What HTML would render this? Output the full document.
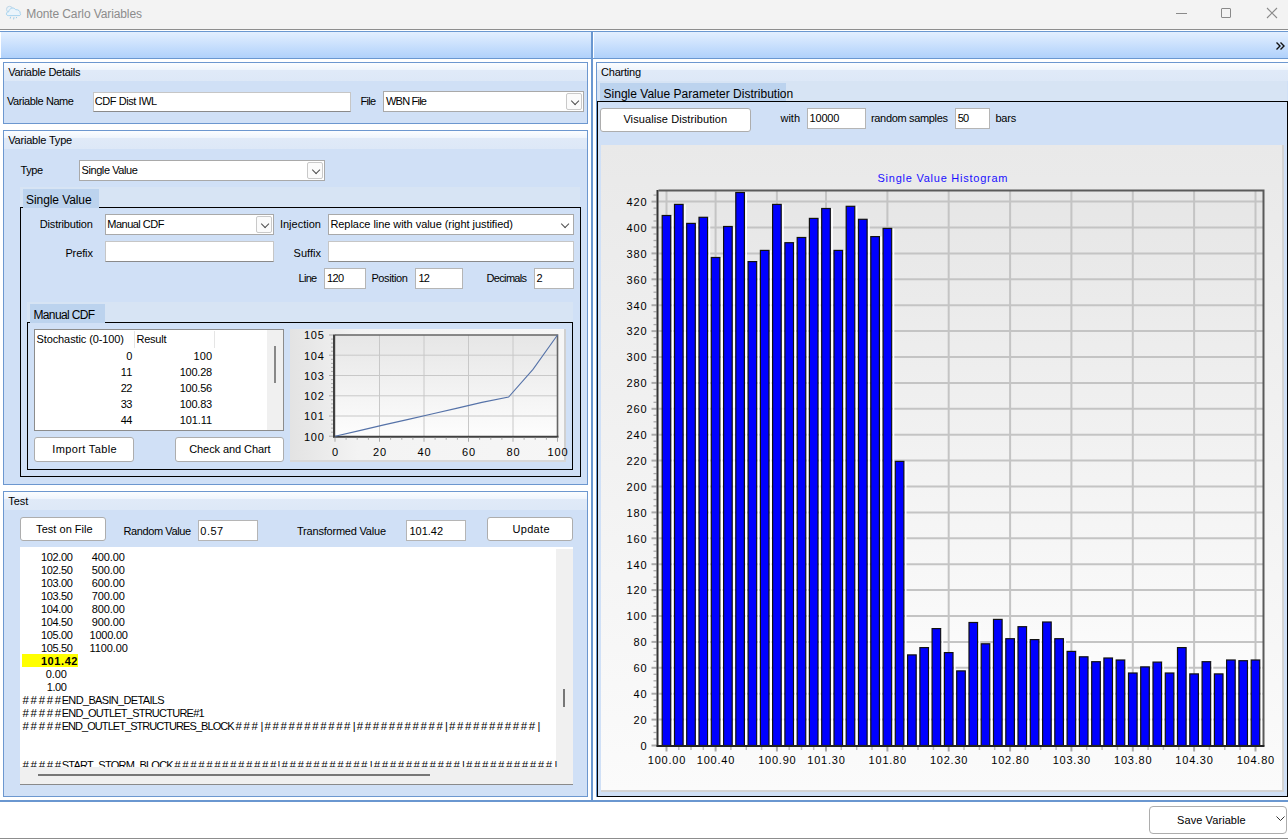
<!DOCTYPE html>
<html><head><meta charset="utf-8">
<style>
*{box-sizing:border-box;margin:0;padding:0}
html,body{width:1288px;height:840px;overflow:hidden;background:#fff}
body{position:relative;font-family:"Liberation Sans",sans-serif;font-size:12px;color:#000}
.a{position:absolute}
.t{position:absolute;white-space:nowrap;line-height:14px;font-size:12px}
.gb{position:absolute;border:1px solid #6c97cf;background:#d0e0f6}
.gh{position:absolute;left:0;right:0;top:0;height:18px;background:linear-gradient(#fbfdff 0,#eef4fc 40%,#e0eaf8 41%,#dde8f7 100%)}
.tb{position:absolute;background:#fff;border:1px solid #c6c6c6;border-bottom-color:#8a8a8a}
.cb{position:absolute;background:#fff;border:1px solid #a9a9a9}
.dd{position:absolute;right:1px;top:1px;bottom:1px;width:16px;border:1px solid #c9c9c9;border-radius:2px;background:#fbfbfb}
.dd:after{content:"";position:absolute;left:4.5px;top:3.6px;width:5.2px;height:5.2px;border-right:1px solid #505050;border-bottom:1px solid #505050;transform:rotate(45deg)}
.btn{position:absolute;background:#fff;border:1px solid #adadad;border-radius:3px;text-align:center;line-height:22px}
.blk{position:absolute;border:1px solid #000}
.tabarea{position:absolute;background:#d7e4f4}
.tabh{position:absolute;background:#bcd3ee;font-size:13.5px;line-height:18px;padding-left:3px;white-space:nowrap}
.r{text-align:right}
.mono{font-size:12px;line-height:13px}
</style></head><body>
<!-- title bar -->
<div class="a" style="left:0;top:0;width:1288px;height:29px;background:#f3f3f3"></div>
<svg class="a" style="left:0;top:0" width="24" height="24"><circle cx="9.5" cy="9.3" r="3" fill="#e9f2f8" stroke="#b9d3e4" stroke-width="0.9"/><path d="M8.2 15.6 C5.6 15.6 6 11.6 8.6 11.9 C9.2 8.2 13.6 6.6 15.7 9.7 C18.2 9.3 20.6 11.2 20.2 13.4 C21 14.6 20.4 15.6 19 15.6 Z" fill="#eaf4fb" stroke="#a6d3ef" stroke-width="1"/><path d="M10.6 16.8 L10.2 18.6 M14 17.2 L13.6 19.4 M16.6 17 L16.3 18.2" stroke="#9ccdea" stroke-width="1"/></svg>
<div class="a" style="left:1176px;top:13px;width:11px;height:1px;background:#8a8a8a"></div>
<div class="a" style="left:1221px;top:8px;width:10px;height:10px;border:1px solid #8a8a8a;border-radius:1px"></div>
<svg class="a" style="left:1266px;top:7px" width="12" height="12"><path d="M1 1 L11 11 M11 1 L1 11" stroke="#8a8a8a" stroke-width="1.1"/></svg>
<div class="a" style="left:0;top:29px;width:1288px;height:1px;background:#8d8d8d"></div>
<!-- toolbars -->
<div class="a" style="left:0;top:31px;width:591px;height:28px;border-top:1px solid #6a97d0;border-bottom:1px solid #6a97d0;background:linear-gradient(#e3efff,#b0d1fb)"></div>
<div class="a" style="left:0;top:32px;width:1px;height:26px;background:#fff"></div>
<div class="a" style="left:591px;top:31px;width:2px;height:771px;background:#6a97d0"></div>
<div class="a" style="left:593px;top:31px;width:695px;height:28px;border-top:1px solid #6a97d0;border-bottom:1px solid #6a97d0;background:linear-gradient(#e3efff,#b0d1fb)"></div>
<div class="a" style="left:593px;top:32px;width:1px;height:26px;background:#fff"></div>
<svg class="a" style="left:1275px;top:41px" width="11" height="10"><path d="M1.5 1.5 L5 5 L1.5 8.5 M5.5 1.5 L9 5 L5.5 8.5" fill="none" stroke="#111" stroke-width="1.4"/></svg>

<!-- Variable Details -->
<div class="gb" style="left:3px;top:62px;width:585px;height:62px"><div class="gh"></div></div>
<div class="tb" style="left:93px;top:92px;width:258px;height:20px"></div>
<div class="cb" style="left:383px;top:91px;width:201px;height:21px"><div class="dd"></div></div>

<!-- Variable Type -->
<div class="gb" style="left:3px;top:130px;width:585px;height:355px"><div class="gh"></div></div>
<div class="cb" style="left:79px;top:160px;width:246px;height:21px"><div class="dd"></div></div>
<div class="tabarea" style="left:20px;top:187px;width:560px;height:20px"></div>
<div class="blk" style="left:20px;top:207px;width:561px;height:270px"></div>
<div class="tabh" style="left:23px;top:189px;width:76px;height:19px"></div>
<div class="cb" style="left:105px;top:214px;width:169px;height:21px"><div class="dd"></div></div>
<div class="cb" style="left:328px;top:214px;width:246px;height:21px"><div class="dd" style="border-color:#fff;background:#fff"></div></div>
<div class="tb" style="left:105px;top:241px;width:169px;height:21px"></div>
<div class="tb" style="left:328px;top:241px;width:246px;height:21px"></div>
<div class="tb" style="left:324px;top:268px;width:42px;height:21px;border-color:#b5b5b5"></div>
<div class="tb" style="left:415px;top:268px;width:48px;height:21px;border-color:#b5b5b5"></div>
<div class="tb" style="left:534px;top:268px;width:40px;height:21px;border-color:#b5b5b5"></div>

<div class="tabarea" style="left:27px;top:302px;width:546px;height:21px"></div>
<div class="blk" style="left:27px;top:322px;width:546px;height:148px"></div>
<div class="tabh" style="left:30px;top:304px;width:75px;height:19px"></div>
<!-- list -->
<div class="a" style="left:34px;top:329px;width:250px;height:102px;background:#fff;border:1px solid #8c8c8c"></div>
<div class="a" style="left:134px;top:331px;width:1px;height:17px;background:#e5e5e5"></div>
<div class="a" style="left:214px;top:331px;width:1px;height:17px;background:#e5e5e5"></div>
<div class="a" style="left:267px;top:330px;width:16px;height:100px;background:#f0f0f0"></div>
<div class="a" style="left:274px;top:346px;width:2px;height:37px;background:#888"></div>
<div class="btn" style="left:34px;top:437px;width:100px;height:25px"></div>
<div class="btn" style="left:175px;top:437px;width:109px;height:25px"></div>
<svg width="1288" height="840" style="position:absolute;left:0;top:0">
<defs><linearGradient id="sg" x1="0" y1="0" x2="0" y2="1"><stop offset="0" stop-color="#e6e6e6"/><stop offset="1" stop-color="#fdfdfd"/></linearGradient><linearGradient id="sg2" x1="0" y1="0" x2="1" y2="0"><stop offset="0" stop-color="#e3e3e3"/><stop offset="0.25" stop-color="#f3f3f3"/><stop offset="1" stop-color="#f6f6f6"/></linearGradient></defs>
<rect x="290" y="329" width="276" height="133" fill="url(#sg2)"/>
<rect x="564" y="329" width="2" height="133" fill="#d0d0d0"/>
<rect x="290" y="460" width="276" height="2" fill="#d8d8d8"/>
<rect x="335" y="335" width="222.5" height="101.25" fill="url(#sg)"/>
<line x1="335" y1="355.2" x2="557.5" y2="355.2" stroke="#c8c8c8" stroke-width="1"/>
<line x1="379.5" y1="335" x2="379.5" y2="436.25" stroke="#c8c8c8" stroke-width="1"/>
<line x1="335" y1="375.5" x2="557.5" y2="375.5" stroke="#c8c8c8" stroke-width="1"/>
<line x1="424.0" y1="335" x2="424.0" y2="436.25" stroke="#c8c8c8" stroke-width="1"/>
<line x1="335" y1="395.8" x2="557.5" y2="395.8" stroke="#c8c8c8" stroke-width="1"/>
<line x1="468.5" y1="335" x2="468.5" y2="436.25" stroke="#c8c8c8" stroke-width="1"/>
<line x1="335" y1="416.0" x2="557.5" y2="416.0" stroke="#c8c8c8" stroke-width="1"/>
<line x1="513.0" y1="335" x2="513.0" y2="436.25" stroke="#c8c8c8" stroke-width="1"/>
<path d="M335 335 L557.5 335 L557.5 436.25" fill="none" stroke="#666" stroke-width="1.6"/>
<rect x="333" y="334.5" width="2.2" height="102.75" fill="#404040"/>
<rect x="333" y="435.75" width="225.5" height="2" fill="#404040"/>
<line x1="329" y1="436.2" x2="333" y2="436.2" stroke="#aaa" stroke-width="1"/>
<line x1="331" y1="432.2" x2="333" y2="432.2" stroke="#aaa" stroke-width="1"/>
<line x1="331" y1="428.1" x2="333" y2="428.1" stroke="#aaa" stroke-width="1"/>
<line x1="331" y1="424.1" x2="333" y2="424.1" stroke="#aaa" stroke-width="1"/>
<line x1="331" y1="420.1" x2="333" y2="420.1" stroke="#aaa" stroke-width="1"/>
<line x1="329" y1="416.0" x2="333" y2="416.0" stroke="#aaa" stroke-width="1"/>
<line x1="331" y1="411.9" x2="333" y2="411.9" stroke="#aaa" stroke-width="1"/>
<line x1="331" y1="407.9" x2="333" y2="407.9" stroke="#aaa" stroke-width="1"/>
<line x1="331" y1="403.9" x2="333" y2="403.9" stroke="#aaa" stroke-width="1"/>
<line x1="331" y1="399.8" x2="333" y2="399.8" stroke="#aaa" stroke-width="1"/>
<line x1="329" y1="395.8" x2="333" y2="395.8" stroke="#aaa" stroke-width="1"/>
<line x1="331" y1="391.7" x2="333" y2="391.7" stroke="#aaa" stroke-width="1"/>
<line x1="331" y1="387.6" x2="333" y2="387.6" stroke="#aaa" stroke-width="1"/>
<line x1="331" y1="383.6" x2="333" y2="383.6" stroke="#aaa" stroke-width="1"/>
<line x1="331" y1="379.6" x2="333" y2="379.6" stroke="#aaa" stroke-width="1"/>
<line x1="329" y1="375.5" x2="333" y2="375.5" stroke="#aaa" stroke-width="1"/>
<line x1="331" y1="371.4" x2="333" y2="371.4" stroke="#aaa" stroke-width="1"/>
<line x1="331" y1="367.4" x2="333" y2="367.4" stroke="#aaa" stroke-width="1"/>
<line x1="331" y1="363.4" x2="333" y2="363.4" stroke="#aaa" stroke-width="1"/>
<line x1="331" y1="359.3" x2="333" y2="359.3" stroke="#aaa" stroke-width="1"/>
<line x1="329" y1="355.2" x2="333" y2="355.2" stroke="#aaa" stroke-width="1"/>
<line x1="331" y1="351.2" x2="333" y2="351.2" stroke="#aaa" stroke-width="1"/>
<line x1="331" y1="347.1" x2="333" y2="347.1" stroke="#aaa" stroke-width="1"/>
<line x1="331" y1="343.1" x2="333" y2="343.1" stroke="#aaa" stroke-width="1"/>
<line x1="331" y1="339.1" x2="333" y2="339.1" stroke="#aaa" stroke-width="1"/>
<line x1="329" y1="335.0" x2="333" y2="335.0" stroke="#aaa" stroke-width="1"/>
<line x1="335.0" y1="437.75" x2="335.0" y2="441.75" stroke="#aaa" stroke-width="1"/>
<line x1="346.1" y1="437.75" x2="346.1" y2="439.75" stroke="#aaa" stroke-width="1"/>
<line x1="357.2" y1="437.75" x2="357.2" y2="439.75" stroke="#aaa" stroke-width="1"/>
<line x1="368.4" y1="437.75" x2="368.4" y2="439.75" stroke="#aaa" stroke-width="1"/>
<line x1="379.5" y1="437.75" x2="379.5" y2="441.75" stroke="#aaa" stroke-width="1"/>
<line x1="390.6" y1="437.75" x2="390.6" y2="439.75" stroke="#aaa" stroke-width="1"/>
<line x1="401.8" y1="437.75" x2="401.8" y2="439.75" stroke="#aaa" stroke-width="1"/>
<line x1="412.9" y1="437.75" x2="412.9" y2="439.75" stroke="#aaa" stroke-width="1"/>
<line x1="424.0" y1="437.75" x2="424.0" y2="441.75" stroke="#aaa" stroke-width="1"/>
<line x1="435.1" y1="437.75" x2="435.1" y2="439.75" stroke="#aaa" stroke-width="1"/>
<line x1="446.2" y1="437.75" x2="446.2" y2="439.75" stroke="#aaa" stroke-width="1"/>
<line x1="457.4" y1="437.75" x2="457.4" y2="439.75" stroke="#aaa" stroke-width="1"/>
<line x1="468.5" y1="437.75" x2="468.5" y2="441.75" stroke="#aaa" stroke-width="1"/>
<line x1="479.6" y1="437.75" x2="479.6" y2="439.75" stroke="#aaa" stroke-width="1"/>
<line x1="490.8" y1="437.75" x2="490.8" y2="439.75" stroke="#aaa" stroke-width="1"/>
<line x1="501.9" y1="437.75" x2="501.9" y2="439.75" stroke="#aaa" stroke-width="1"/>
<line x1="513.0" y1="437.75" x2="513.0" y2="441.75" stroke="#aaa" stroke-width="1"/>
<line x1="524.1" y1="437.75" x2="524.1" y2="439.75" stroke="#aaa" stroke-width="1"/>
<line x1="535.2" y1="437.75" x2="535.2" y2="439.75" stroke="#aaa" stroke-width="1"/>
<line x1="546.4" y1="437.75" x2="546.4" y2="439.75" stroke="#aaa" stroke-width="1"/>
<line x1="557.5" y1="437.75" x2="557.5" y2="441.75" stroke="#aaa" stroke-width="1"/>
<path d="M335.0 436.2 L359.5 430.6 L383.9 424.9 L408.4 419.4 L432.9 413.8 L457.4 408.1 L481.9 402.4 L508.6 397.0 L533.0 369.4 L557.5 335.0" fill="none" stroke="#5572a8" stroke-width="1.1"/>
</svg>
<div class="t" style="left:303.90px;top:429.51px;font-size:11px;letter-spacing:0.825px">100</div>
<div class="t" style="left:303.90px;top:409.26px;font-size:11px;letter-spacing:0.825px">101</div>
<div class="t" style="left:303.90px;top:389.01px;font-size:11px;letter-spacing:0.825px">102</div>
<div class="t" style="left:303.90px;top:368.76px;font-size:11px;letter-spacing:0.825px">103</div>
<div class="t" style="left:303.90px;top:348.51px;font-size:11px;letter-spacing:0.825px">104</div>
<div class="t" style="left:303.90px;top:328.26px;font-size:11px;letter-spacing:0.825px">105</div>
<div class="t" style="left:331.95px;top:444.86px;font-size:11px">0</div>
<div class="t" style="left:372.95px;top:444.86px;font-size:11px;letter-spacing:0.850px">20</div>
<div class="t" style="left:417.45px;top:444.86px;font-size:11px;letter-spacing:0.850px">40</div>
<div class="t" style="left:461.95px;top:444.86px;font-size:11px;letter-spacing:0.850px">60</div>
<div class="t" style="left:506.45px;top:444.86px;font-size:11px;letter-spacing:0.850px">80</div>
<div class="t" style="left:547.50px;top:444.86px;font-size:11px;letter-spacing:0.825px">100</div>

<!-- Test -->
<div class="gb" style="left:3px;top:491px;width:585px;height:306px"><div class="gh"></div></div>
<div class="btn" style="left:20px;top:517px;width:86px;height:24px;line-height:20px"></div>
<div class="tb" style="left:198px;top:520px;width:60px;height:21px;border-color:#b5b5b5"></div>
<div class="tb" style="left:406px;top:520px;width:60px;height:21px;border-color:#b5b5b5"></div>
<div class="btn" style="left:487px;top:517px;width:86px;height:24px;line-height:20px"></div>
<div class="a" style="left:20px;top:547px;width:553px;height:238px;background:#fff;border-bottom:1px solid #8a8a8a"></div>
<div class="a" style="left:556px;top:549px;width:17px;height:218px;background:#f0f0f0"></div>
<div class="a" style="left:563px;top:689px;width:2px;height:18px;background:#777"></div>
<div class="a" style="left:20px;top:767px;width:553px;height:17px;background:#f0f0f0"></div>
<div class="a" style="left:38px;top:774px;width:392px;height:2px;background:#777"></div>
<div class="a" style="left:22px;top:654px;width:56px;height:13px;background:#ffff00"></div>

<!-- Charting -->
<div class="gb" style="left:596px;top:62px;width:694px;height:735px"><div class="gh"></div></div>
<div class="tabarea" style="left:598px;top:81px;width:689px;height:21px"></div>
<div class="blk" style="left:597px;top:101px;width:691px;height:696px"></div>
<div class="tabh" style="left:600px;top:83px;width:186px;height:18px"></div>
<div class="btn" style="left:600px;top:108px;width:151px;height:24px;line-height:21px"></div>
<div class="tb" style="left:807px;top:108px;width:59px;height:21px;border-color:#b5b5b5"></div>
<div class="tb" style="left:955px;top:108px;width:35px;height:21px;border-color:#b5b5b5"></div>
<svg width="1288" height="840" style="position:absolute;left:0;top:0">
<defs><linearGradient id="pg" x1="0" y1="0" x2="0" y2="1"><stop offset="0" stop-color="#e6e6e6"/><stop offset="1" stop-color="#ffffff"/></linearGradient><linearGradient id="cg" x1="0" y1="0" x2="0" y2="1"><stop offset="0" stop-color="#e9e9e9"/><stop offset="1" stop-color="#fbfbfb"/></linearGradient></defs>
<rect x="601" y="145" width="682" height="646" fill="url(#cg)"/>
<rect x="1282" y="145" width="2" height="646" fill="#d4d4d4"/>
<rect x="601" y="790" width="683" height="2" fill="#d4d4d4"/>
<rect x="658.5" y="190.5" width="605.0" height="555.0" fill="url(#pg)"/>
<line x1="658.5" y1="719.6" x2="1263.5" y2="719.6" stroke="#c4c4c4" stroke-width="2"/>
<line x1="658.5" y1="693.7" x2="1263.5" y2="693.7" stroke="#c4c4c4" stroke-width="2"/>
<line x1="658.5" y1="667.8" x2="1263.5" y2="667.8" stroke="#c4c4c4" stroke-width="2"/>
<line x1="658.5" y1="641.9" x2="1263.5" y2="641.9" stroke="#c4c4c4" stroke-width="2"/>
<line x1="658.5" y1="616.0" x2="1263.5" y2="616.0" stroke="#c4c4c4" stroke-width="2"/>
<line x1="658.5" y1="590.1" x2="1263.5" y2="590.1" stroke="#c4c4c4" stroke-width="2"/>
<line x1="658.5" y1="564.2" x2="1263.5" y2="564.2" stroke="#c4c4c4" stroke-width="2"/>
<line x1="658.5" y1="538.3" x2="1263.5" y2="538.3" stroke="#c4c4c4" stroke-width="2"/>
<line x1="658.5" y1="512.4" x2="1263.5" y2="512.4" stroke="#c4c4c4" stroke-width="2"/>
<line x1="658.5" y1="486.5" x2="1263.5" y2="486.5" stroke="#c4c4c4" stroke-width="2"/>
<line x1="658.5" y1="460.6" x2="1263.5" y2="460.6" stroke="#c4c4c4" stroke-width="2"/>
<line x1="658.5" y1="434.7" x2="1263.5" y2="434.7" stroke="#c4c4c4" stroke-width="2"/>
<line x1="658.5" y1="408.8" x2="1263.5" y2="408.8" stroke="#c4c4c4" stroke-width="2"/>
<line x1="658.5" y1="382.9" x2="1263.5" y2="382.9" stroke="#c4c4c4" stroke-width="2"/>
<line x1="658.5" y1="357.0" x2="1263.5" y2="357.0" stroke="#c4c4c4" stroke-width="2"/>
<line x1="658.5" y1="331.1" x2="1263.5" y2="331.1" stroke="#c4c4c4" stroke-width="2"/>
<line x1="658.5" y1="305.2" x2="1263.5" y2="305.2" stroke="#c4c4c4" stroke-width="2"/>
<line x1="658.5" y1="279.3" x2="1263.5" y2="279.3" stroke="#c4c4c4" stroke-width="2"/>
<line x1="658.5" y1="253.4" x2="1263.5" y2="253.4" stroke="#c4c4c4" stroke-width="2"/>
<line x1="658.5" y1="227.5" x2="1263.5" y2="227.5" stroke="#c4c4c4" stroke-width="2"/>
<line x1="658.5" y1="201.6" x2="1263.5" y2="201.6" stroke="#c4c4c4" stroke-width="2"/>
<line x1="666.5" y1="190.5" x2="666.5" y2="745.5" stroke="#c4c4c4" stroke-width="2"/>
<line x1="715.6" y1="190.5" x2="715.6" y2="745.5" stroke="#c4c4c4" stroke-width="2"/>
<line x1="776.9" y1="190.5" x2="776.9" y2="745.5" stroke="#c4c4c4" stroke-width="2"/>
<line x1="826.0" y1="190.5" x2="826.0" y2="745.5" stroke="#c4c4c4" stroke-width="2"/>
<line x1="887.4" y1="190.5" x2="887.4" y2="745.5" stroke="#c4c4c4" stroke-width="2"/>
<line x1="948.7" y1="190.5" x2="948.7" y2="745.5" stroke="#c4c4c4" stroke-width="2"/>
<line x1="1010.1" y1="190.5" x2="1010.1" y2="745.5" stroke="#c4c4c4" stroke-width="2"/>
<line x1="1071.4" y1="190.5" x2="1071.4" y2="745.5" stroke="#c4c4c4" stroke-width="2"/>
<line x1="1132.8" y1="190.5" x2="1132.8" y2="745.5" stroke="#c4c4c4" stroke-width="2"/>
<line x1="1194.1" y1="190.5" x2="1194.1" y2="745.5" stroke="#c4c4c4" stroke-width="2"/>
<line x1="1255.5" y1="190.5" x2="1255.5" y2="745.5" stroke="#c4c4c4" stroke-width="2"/>
<rect x="662.2" y="215.5" width="8.6" height="530.0" fill="#0000ff" stroke="#111" stroke-width="1.2"/>
<line x1="672.6" y1="215.5" x2="672.6" y2="745.5" stroke="#fff" stroke-width="1.6"/>
<rect x="674.5" y="204.4" width="8.6" height="541.1" fill="#0000ff" stroke="#111" stroke-width="1.2"/>
<line x1="684.9" y1="204.4" x2="684.9" y2="745.5" stroke="#fff" stroke-width="1.6"/>
<rect x="686.7" y="223.4" width="8.6" height="522.1" fill="#0000ff" stroke="#111" stroke-width="1.2"/>
<line x1="697.1" y1="223.4" x2="697.1" y2="745.5" stroke="#fff" stroke-width="1.6"/>
<rect x="699.0" y="217.3" width="8.6" height="528.2" fill="#0000ff" stroke="#111" stroke-width="1.2"/>
<line x1="709.4" y1="217.3" x2="709.4" y2="745.5" stroke="#fff" stroke-width="1.6"/>
<rect x="711.3" y="257.5" width="8.6" height="488.0" fill="#0000ff" stroke="#111" stroke-width="1.2"/>
<line x1="721.7" y1="257.5" x2="721.7" y2="745.5" stroke="#fff" stroke-width="1.6"/>
<rect x="723.6" y="226.5" width="8.6" height="519.0" fill="#0000ff" stroke="#111" stroke-width="1.2"/>
<line x1="734.0" y1="226.5" x2="734.0" y2="745.5" stroke="#fff" stroke-width="1.6"/>
<rect x="735.8" y="192.5" width="8.6" height="553.0" fill="#0000ff" stroke="#111" stroke-width="1.2"/>
<line x1="746.2" y1="192.5" x2="746.2" y2="745.5" stroke="#fff" stroke-width="1.6"/>
<rect x="748.1" y="261.6" width="8.6" height="483.9" fill="#0000ff" stroke="#111" stroke-width="1.2"/>
<line x1="758.5" y1="261.6" x2="758.5" y2="745.5" stroke="#fff" stroke-width="1.6"/>
<rect x="760.4" y="250.4" width="8.6" height="495.1" fill="#0000ff" stroke="#111" stroke-width="1.2"/>
<line x1="770.8" y1="250.4" x2="770.8" y2="745.5" stroke="#fff" stroke-width="1.6"/>
<rect x="772.6" y="204.4" width="8.6" height="541.1" fill="#0000ff" stroke="#111" stroke-width="1.2"/>
<line x1="783.0" y1="204.4" x2="783.0" y2="745.5" stroke="#fff" stroke-width="1.6"/>
<rect x="784.9" y="242.7" width="8.6" height="502.8" fill="#0000ff" stroke="#111" stroke-width="1.2"/>
<line x1="795.3" y1="242.7" x2="795.3" y2="745.5" stroke="#fff" stroke-width="1.6"/>
<rect x="797.2" y="237.5" width="8.6" height="508.0" fill="#0000ff" stroke="#111" stroke-width="1.2"/>
<line x1="807.6" y1="237.5" x2="807.6" y2="745.5" stroke="#fff" stroke-width="1.6"/>
<rect x="809.4" y="218.4" width="8.6" height="527.1" fill="#0000ff" stroke="#111" stroke-width="1.2"/>
<line x1="819.8" y1="218.4" x2="819.8" y2="745.5" stroke="#fff" stroke-width="1.6"/>
<rect x="821.7" y="208.5" width="8.6" height="537.0" fill="#0000ff" stroke="#111" stroke-width="1.2"/>
<line x1="832.1" y1="208.5" x2="832.1" y2="745.5" stroke="#fff" stroke-width="1.6"/>
<rect x="834.0" y="250.4" width="8.6" height="495.1" fill="#0000ff" stroke="#111" stroke-width="1.2"/>
<line x1="844.4" y1="250.4" x2="844.4" y2="745.5" stroke="#fff" stroke-width="1.6"/>
<rect x="846.2" y="206.3" width="8.6" height="539.2" fill="#0000ff" stroke="#111" stroke-width="1.2"/>
<line x1="856.6" y1="206.3" x2="856.6" y2="745.5" stroke="#fff" stroke-width="1.6"/>
<rect x="858.5" y="219.3" width="8.6" height="526.2" fill="#0000ff" stroke="#111" stroke-width="1.2"/>
<line x1="868.9" y1="219.3" x2="868.9" y2="745.5" stroke="#fff" stroke-width="1.6"/>
<rect x="870.8" y="236.6" width="8.6" height="508.9" fill="#0000ff" stroke="#111" stroke-width="1.2"/>
<line x1="881.2" y1="236.6" x2="881.2" y2="745.5" stroke="#fff" stroke-width="1.6"/>
<rect x="883.1" y="228.4" width="8.6" height="517.1" fill="#0000ff" stroke="#111" stroke-width="1.2"/>
<line x1="893.5" y1="228.4" x2="893.5" y2="745.5" stroke="#fff" stroke-width="1.6"/>
<rect x="895.3" y="461.4" width="8.6" height="284.1" fill="#0000ff" stroke="#111" stroke-width="1.2"/>
<line x1="905.7" y1="461.4" x2="905.7" y2="745.5" stroke="#fff" stroke-width="1.6"/>
<rect x="907.6" y="654.9" width="8.6" height="90.6" fill="#0000ff" stroke="#111" stroke-width="1.2"/>
<line x1="918.0" y1="654.9" x2="918.0" y2="745.5" stroke="#fff" stroke-width="1.6"/>
<rect x="919.9" y="647.6" width="8.6" height="97.9" fill="#0000ff" stroke="#111" stroke-width="1.2"/>
<line x1="930.3" y1="647.6" x2="930.3" y2="745.5" stroke="#fff" stroke-width="1.6"/>
<rect x="932.1" y="628.6" width="8.6" height="116.9" fill="#0000ff" stroke="#111" stroke-width="1.2"/>
<line x1="942.5" y1="628.6" x2="942.5" y2="745.5" stroke="#fff" stroke-width="1.6"/>
<rect x="944.4" y="652.6" width="8.6" height="92.9" fill="#0000ff" stroke="#111" stroke-width="1.2"/>
<line x1="954.8" y1="652.6" x2="954.8" y2="745.5" stroke="#fff" stroke-width="1.6"/>
<rect x="956.7" y="670.9" width="8.6" height="74.6" fill="#0000ff" stroke="#111" stroke-width="1.2"/>
<line x1="967.1" y1="670.9" x2="967.1" y2="745.5" stroke="#fff" stroke-width="1.6"/>
<rect x="969.0" y="622.5" width="8.6" height="123.0" fill="#0000ff" stroke="#111" stroke-width="1.2"/>
<line x1="979.4" y1="622.5" x2="979.4" y2="745.5" stroke="#fff" stroke-width="1.6"/>
<rect x="981.2" y="643.8" width="8.6" height="101.7" fill="#0000ff" stroke="#111" stroke-width="1.2"/>
<line x1="991.6" y1="643.8" x2="991.6" y2="745.5" stroke="#fff" stroke-width="1.6"/>
<rect x="993.5" y="619.4" width="8.6" height="126.1" fill="#0000ff" stroke="#111" stroke-width="1.2"/>
<line x1="1003.9" y1="619.4" x2="1003.9" y2="745.5" stroke="#fff" stroke-width="1.6"/>
<rect x="1005.8" y="638.7" width="8.6" height="106.8" fill="#0000ff" stroke="#111" stroke-width="1.2"/>
<line x1="1016.2" y1="638.7" x2="1016.2" y2="745.5" stroke="#fff" stroke-width="1.6"/>
<rect x="1018.0" y="626.7" width="8.6" height="118.8" fill="#0000ff" stroke="#111" stroke-width="1.2"/>
<line x1="1028.4" y1="626.7" x2="1028.4" y2="745.5" stroke="#fff" stroke-width="1.6"/>
<rect x="1030.3" y="639.6" width="8.6" height="105.9" fill="#0000ff" stroke="#111" stroke-width="1.2"/>
<line x1="1040.7" y1="639.6" x2="1040.7" y2="745.5" stroke="#fff" stroke-width="1.6"/>
<rect x="1042.6" y="622.0" width="8.6" height="123.5" fill="#0000ff" stroke="#111" stroke-width="1.2"/>
<line x1="1053.0" y1="622.0" x2="1053.0" y2="745.5" stroke="#fff" stroke-width="1.6"/>
<rect x="1054.8" y="638.7" width="8.6" height="106.8" fill="#0000ff" stroke="#111" stroke-width="1.2"/>
<line x1="1065.2" y1="638.7" x2="1065.2" y2="745.5" stroke="#fff" stroke-width="1.6"/>
<rect x="1067.1" y="651.4" width="8.6" height="94.1" fill="#0000ff" stroke="#111" stroke-width="1.2"/>
<line x1="1077.5" y1="651.4" x2="1077.5" y2="745.5" stroke="#fff" stroke-width="1.6"/>
<rect x="1079.4" y="656.8" width="8.6" height="88.7" fill="#0000ff" stroke="#111" stroke-width="1.2"/>
<line x1="1089.8" y1="656.8" x2="1089.8" y2="745.5" stroke="#fff" stroke-width="1.6"/>
<rect x="1091.7" y="661.7" width="8.6" height="83.8" fill="#0000ff" stroke="#111" stroke-width="1.2"/>
<line x1="1102.0" y1="661.7" x2="1102.0" y2="745.5" stroke="#fff" stroke-width="1.6"/>
<rect x="1103.9" y="658.0" width="8.6" height="87.5" fill="#0000ff" stroke="#111" stroke-width="1.2"/>
<line x1="1114.3" y1="658.0" x2="1114.3" y2="745.5" stroke="#fff" stroke-width="1.6"/>
<rect x="1116.2" y="660.0" width="8.6" height="85.5" fill="#0000ff" stroke="#111" stroke-width="1.2"/>
<line x1="1126.6" y1="660.0" x2="1126.6" y2="745.5" stroke="#fff" stroke-width="1.6"/>
<rect x="1128.5" y="673.0" width="8.6" height="72.5" fill="#0000ff" stroke="#111" stroke-width="1.2"/>
<line x1="1138.9" y1="673.0" x2="1138.9" y2="745.5" stroke="#fff" stroke-width="1.6"/>
<rect x="1140.7" y="666.9" width="8.6" height="78.6" fill="#0000ff" stroke="#111" stroke-width="1.2"/>
<line x1="1151.1" y1="666.9" x2="1151.1" y2="745.5" stroke="#fff" stroke-width="1.6"/>
<rect x="1153.0" y="662.1" width="8.6" height="83.4" fill="#0000ff" stroke="#111" stroke-width="1.2"/>
<line x1="1163.4" y1="662.1" x2="1163.4" y2="745.5" stroke="#fff" stroke-width="1.6"/>
<rect x="1165.3" y="673.0" width="8.6" height="72.5" fill="#0000ff" stroke="#111" stroke-width="1.2"/>
<line x1="1175.7" y1="673.0" x2="1175.7" y2="745.5" stroke="#fff" stroke-width="1.6"/>
<rect x="1177.5" y="647.6" width="8.6" height="97.9" fill="#0000ff" stroke="#111" stroke-width="1.2"/>
<line x1="1187.9" y1="647.6" x2="1187.9" y2="745.5" stroke="#fff" stroke-width="1.6"/>
<rect x="1189.8" y="673.9" width="8.6" height="71.6" fill="#0000ff" stroke="#111" stroke-width="1.2"/>
<line x1="1200.2" y1="673.9" x2="1200.2" y2="745.5" stroke="#fff" stroke-width="1.6"/>
<rect x="1202.1" y="661.7" width="8.6" height="83.8" fill="#0000ff" stroke="#111" stroke-width="1.2"/>
<line x1="1212.5" y1="661.7" x2="1212.5" y2="745.5" stroke="#fff" stroke-width="1.6"/>
<rect x="1214.4" y="673.9" width="8.6" height="71.6" fill="#0000ff" stroke="#111" stroke-width="1.2"/>
<line x1="1224.8" y1="673.9" x2="1224.8" y2="745.5" stroke="#fff" stroke-width="1.6"/>
<rect x="1226.6" y="660.0" width="8.6" height="85.5" fill="#0000ff" stroke="#111" stroke-width="1.2"/>
<line x1="1237.0" y1="660.0" x2="1237.0" y2="745.5" stroke="#fff" stroke-width="1.6"/>
<rect x="1238.9" y="660.7" width="8.6" height="84.8" fill="#0000ff" stroke="#111" stroke-width="1.2"/>
<line x1="1249.3" y1="660.7" x2="1249.3" y2="745.5" stroke="#fff" stroke-width="1.6"/>
<rect x="1251.2" y="660.0" width="8.6" height="85.5" fill="#0000ff" stroke="#111" stroke-width="1.2"/>
<line x1="1261.6" y1="660.0" x2="1261.6" y2="745.5" stroke="#fff" stroke-width="1.6"/>
<path d="M658.5 190.5 L1263.5 190.5 L1263.5 745.5" fill="none" stroke="#5a5a5a" stroke-width="2"/>
<line x1="651.5" y1="745.5" x2="656.5" y2="745.5" stroke="#aaa" stroke-width="2"/>
<line x1="653.5" y1="739.0" x2="656.5" y2="739.0" stroke="#aaa" stroke-width="1.3"/>
<line x1="653.5" y1="732.5" x2="656.5" y2="732.5" stroke="#aaa" stroke-width="1.3"/>
<line x1="653.5" y1="726.1" x2="656.5" y2="726.1" stroke="#aaa" stroke-width="1.3"/>
<line x1="651.5" y1="719.6" x2="656.5" y2="719.6" stroke="#aaa" stroke-width="2"/>
<line x1="653.5" y1="713.1" x2="656.5" y2="713.1" stroke="#aaa" stroke-width="1.3"/>
<line x1="653.5" y1="706.6" x2="656.5" y2="706.6" stroke="#aaa" stroke-width="1.3"/>
<line x1="653.5" y1="700.2" x2="656.5" y2="700.2" stroke="#aaa" stroke-width="1.3"/>
<line x1="651.5" y1="693.7" x2="656.5" y2="693.7" stroke="#aaa" stroke-width="2"/>
<line x1="653.5" y1="687.2" x2="656.5" y2="687.2" stroke="#aaa" stroke-width="1.3"/>
<line x1="653.5" y1="680.8" x2="656.5" y2="680.8" stroke="#aaa" stroke-width="1.3"/>
<line x1="653.5" y1="674.3" x2="656.5" y2="674.3" stroke="#aaa" stroke-width="1.3"/>
<line x1="651.5" y1="667.8" x2="656.5" y2="667.8" stroke="#aaa" stroke-width="2"/>
<line x1="653.5" y1="661.3" x2="656.5" y2="661.3" stroke="#aaa" stroke-width="1.3"/>
<line x1="653.5" y1="654.9" x2="656.5" y2="654.9" stroke="#aaa" stroke-width="1.3"/>
<line x1="653.5" y1="648.4" x2="656.5" y2="648.4" stroke="#aaa" stroke-width="1.3"/>
<line x1="651.5" y1="641.9" x2="656.5" y2="641.9" stroke="#aaa" stroke-width="2"/>
<line x1="653.5" y1="635.4" x2="656.5" y2="635.4" stroke="#aaa" stroke-width="1.3"/>
<line x1="653.5" y1="629.0" x2="656.5" y2="629.0" stroke="#aaa" stroke-width="1.3"/>
<line x1="653.5" y1="622.5" x2="656.5" y2="622.5" stroke="#aaa" stroke-width="1.3"/>
<line x1="651.5" y1="616.0" x2="656.5" y2="616.0" stroke="#aaa" stroke-width="2"/>
<line x1="653.5" y1="609.5" x2="656.5" y2="609.5" stroke="#aaa" stroke-width="1.3"/>
<line x1="653.5" y1="603.0" x2="656.5" y2="603.0" stroke="#aaa" stroke-width="1.3"/>
<line x1="653.5" y1="596.6" x2="656.5" y2="596.6" stroke="#aaa" stroke-width="1.3"/>
<line x1="651.5" y1="590.1" x2="656.5" y2="590.1" stroke="#aaa" stroke-width="2"/>
<line x1="653.5" y1="583.6" x2="656.5" y2="583.6" stroke="#aaa" stroke-width="1.3"/>
<line x1="653.5" y1="577.1" x2="656.5" y2="577.1" stroke="#aaa" stroke-width="1.3"/>
<line x1="653.5" y1="570.7" x2="656.5" y2="570.7" stroke="#aaa" stroke-width="1.3"/>
<line x1="651.5" y1="564.2" x2="656.5" y2="564.2" stroke="#aaa" stroke-width="2"/>
<line x1="653.5" y1="557.7" x2="656.5" y2="557.7" stroke="#aaa" stroke-width="1.3"/>
<line x1="653.5" y1="551.2" x2="656.5" y2="551.2" stroke="#aaa" stroke-width="1.3"/>
<line x1="653.5" y1="544.8" x2="656.5" y2="544.8" stroke="#aaa" stroke-width="1.3"/>
<line x1="651.5" y1="538.3" x2="656.5" y2="538.3" stroke="#aaa" stroke-width="2"/>
<line x1="653.5" y1="531.8" x2="656.5" y2="531.8" stroke="#aaa" stroke-width="1.3"/>
<line x1="653.5" y1="525.4" x2="656.5" y2="525.4" stroke="#aaa" stroke-width="1.3"/>
<line x1="653.5" y1="518.9" x2="656.5" y2="518.9" stroke="#aaa" stroke-width="1.3"/>
<line x1="651.5" y1="512.4" x2="656.5" y2="512.4" stroke="#aaa" stroke-width="2"/>
<line x1="653.5" y1="505.9" x2="656.5" y2="505.9" stroke="#aaa" stroke-width="1.3"/>
<line x1="653.5" y1="499.5" x2="656.5" y2="499.5" stroke="#aaa" stroke-width="1.3"/>
<line x1="653.5" y1="493.0" x2="656.5" y2="493.0" stroke="#aaa" stroke-width="1.3"/>
<line x1="651.5" y1="486.5" x2="656.5" y2="486.5" stroke="#aaa" stroke-width="2"/>
<line x1="653.5" y1="480.0" x2="656.5" y2="480.0" stroke="#aaa" stroke-width="1.3"/>
<line x1="653.5" y1="473.6" x2="656.5" y2="473.6" stroke="#aaa" stroke-width="1.3"/>
<line x1="653.5" y1="467.1" x2="656.5" y2="467.1" stroke="#aaa" stroke-width="1.3"/>
<line x1="651.5" y1="460.6" x2="656.5" y2="460.6" stroke="#aaa" stroke-width="2"/>
<line x1="653.5" y1="454.1" x2="656.5" y2="454.1" stroke="#aaa" stroke-width="1.3"/>
<line x1="653.5" y1="447.7" x2="656.5" y2="447.7" stroke="#aaa" stroke-width="1.3"/>
<line x1="653.5" y1="441.2" x2="656.5" y2="441.2" stroke="#aaa" stroke-width="1.3"/>
<line x1="651.5" y1="434.7" x2="656.5" y2="434.7" stroke="#aaa" stroke-width="2"/>
<line x1="653.5" y1="428.2" x2="656.5" y2="428.2" stroke="#aaa" stroke-width="1.3"/>
<line x1="653.5" y1="421.8" x2="656.5" y2="421.8" stroke="#aaa" stroke-width="1.3"/>
<line x1="653.5" y1="415.3" x2="656.5" y2="415.3" stroke="#aaa" stroke-width="1.3"/>
<line x1="651.5" y1="408.8" x2="656.5" y2="408.8" stroke="#aaa" stroke-width="2"/>
<line x1="653.5" y1="402.3" x2="656.5" y2="402.3" stroke="#aaa" stroke-width="1.3"/>
<line x1="653.5" y1="395.9" x2="656.5" y2="395.9" stroke="#aaa" stroke-width="1.3"/>
<line x1="653.5" y1="389.4" x2="656.5" y2="389.4" stroke="#aaa" stroke-width="1.3"/>
<line x1="651.5" y1="382.9" x2="656.5" y2="382.9" stroke="#aaa" stroke-width="2"/>
<line x1="653.5" y1="376.4" x2="656.5" y2="376.4" stroke="#aaa" stroke-width="1.3"/>
<line x1="653.5" y1="370.0" x2="656.5" y2="370.0" stroke="#aaa" stroke-width="1.3"/>
<line x1="653.5" y1="363.5" x2="656.5" y2="363.5" stroke="#aaa" stroke-width="1.3"/>
<line x1="651.5" y1="357.0" x2="656.5" y2="357.0" stroke="#aaa" stroke-width="2"/>
<line x1="653.5" y1="350.5" x2="656.5" y2="350.5" stroke="#aaa" stroke-width="1.3"/>
<line x1="653.5" y1="344.1" x2="656.5" y2="344.1" stroke="#aaa" stroke-width="1.3"/>
<line x1="653.5" y1="337.6" x2="656.5" y2="337.6" stroke="#aaa" stroke-width="1.3"/>
<line x1="651.5" y1="331.1" x2="656.5" y2="331.1" stroke="#aaa" stroke-width="2"/>
<line x1="653.5" y1="324.6" x2="656.5" y2="324.6" stroke="#aaa" stroke-width="1.3"/>
<line x1="653.5" y1="318.2" x2="656.5" y2="318.2" stroke="#aaa" stroke-width="1.3"/>
<line x1="653.5" y1="311.7" x2="656.5" y2="311.7" stroke="#aaa" stroke-width="1.3"/>
<line x1="651.5" y1="305.2" x2="656.5" y2="305.2" stroke="#aaa" stroke-width="2"/>
<line x1="653.5" y1="298.7" x2="656.5" y2="298.7" stroke="#aaa" stroke-width="1.3"/>
<line x1="653.5" y1="292.2" x2="656.5" y2="292.2" stroke="#aaa" stroke-width="1.3"/>
<line x1="653.5" y1="285.8" x2="656.5" y2="285.8" stroke="#aaa" stroke-width="1.3"/>
<line x1="651.5" y1="279.3" x2="656.5" y2="279.3" stroke="#aaa" stroke-width="2"/>
<line x1="653.5" y1="272.8" x2="656.5" y2="272.8" stroke="#aaa" stroke-width="1.3"/>
<line x1="653.5" y1="266.4" x2="656.5" y2="266.4" stroke="#aaa" stroke-width="1.3"/>
<line x1="653.5" y1="259.9" x2="656.5" y2="259.9" stroke="#aaa" stroke-width="1.3"/>
<line x1="651.5" y1="253.4" x2="656.5" y2="253.4" stroke="#aaa" stroke-width="2"/>
<line x1="653.5" y1="246.9" x2="656.5" y2="246.9" stroke="#aaa" stroke-width="1.3"/>
<line x1="653.5" y1="240.5" x2="656.5" y2="240.5" stroke="#aaa" stroke-width="1.3"/>
<line x1="653.5" y1="234.0" x2="656.5" y2="234.0" stroke="#aaa" stroke-width="1.3"/>
<line x1="651.5" y1="227.5" x2="656.5" y2="227.5" stroke="#aaa" stroke-width="2"/>
<line x1="653.5" y1="221.0" x2="656.5" y2="221.0" stroke="#aaa" stroke-width="1.3"/>
<line x1="653.5" y1="214.6" x2="656.5" y2="214.6" stroke="#aaa" stroke-width="1.3"/>
<line x1="653.5" y1="208.1" x2="656.5" y2="208.1" stroke="#aaa" stroke-width="1.3"/>
<line x1="651.5" y1="201.6" x2="656.5" y2="201.6" stroke="#aaa" stroke-width="2"/>
<line x1="653.5" y1="195.1" x2="656.5" y2="195.1" stroke="#aaa" stroke-width="1.3"/>
<rect x="656.5" y="190.0" width="2" height="556.5" fill="#333"/>
<rect x="656.5" y="745.0" width="608.0" height="2" fill="#222"/>
<line x1="666.5" y1="747.0" x2="666.5" y2="751.5" stroke="#aaa" stroke-width="2"/>
<line x1="678.8" y1="747.0" x2="678.8" y2="750.0" stroke="#bbb" stroke-width="1.5"/>
<line x1="691.0" y1="747.0" x2="691.0" y2="750.0" stroke="#bbb" stroke-width="1.5"/>
<line x1="703.3" y1="747.0" x2="703.3" y2="750.0" stroke="#bbb" stroke-width="1.5"/>
<line x1="715.6" y1="747.0" x2="715.6" y2="751.5" stroke="#aaa" stroke-width="2"/>
<line x1="730.9" y1="747.0" x2="730.9" y2="750.0" stroke="#bbb" stroke-width="1.5"/>
<line x1="746.3" y1="747.0" x2="746.3" y2="750.0" stroke="#bbb" stroke-width="1.5"/>
<line x1="761.6" y1="747.0" x2="761.6" y2="750.0" stroke="#bbb" stroke-width="1.5"/>
<line x1="776.9" y1="747.0" x2="776.9" y2="751.5" stroke="#aaa" stroke-width="2"/>
<line x1="789.2" y1="747.0" x2="789.2" y2="750.0" stroke="#bbb" stroke-width="1.5"/>
<line x1="801.5" y1="747.0" x2="801.5" y2="750.0" stroke="#bbb" stroke-width="1.5"/>
<line x1="813.7" y1="747.0" x2="813.7" y2="750.0" stroke="#bbb" stroke-width="1.5"/>
<line x1="826.0" y1="747.0" x2="826.0" y2="751.5" stroke="#aaa" stroke-width="2"/>
<line x1="841.3" y1="747.0" x2="841.3" y2="750.0" stroke="#bbb" stroke-width="1.5"/>
<line x1="856.7" y1="747.0" x2="856.7" y2="750.0" stroke="#bbb" stroke-width="1.5"/>
<line x1="872.0" y1="747.0" x2="872.0" y2="750.0" stroke="#bbb" stroke-width="1.5"/>
<line x1="887.4" y1="747.0" x2="887.4" y2="751.5" stroke="#aaa" stroke-width="2"/>
<line x1="902.7" y1="747.0" x2="902.7" y2="750.0" stroke="#bbb" stroke-width="1.5"/>
<line x1="918.0" y1="747.0" x2="918.0" y2="750.0" stroke="#bbb" stroke-width="1.5"/>
<line x1="933.4" y1="747.0" x2="933.4" y2="750.0" stroke="#bbb" stroke-width="1.5"/>
<line x1="948.7" y1="747.0" x2="948.7" y2="751.5" stroke="#aaa" stroke-width="2"/>
<line x1="964.0" y1="747.0" x2="964.0" y2="750.0" stroke="#bbb" stroke-width="1.5"/>
<line x1="979.4" y1="747.0" x2="979.4" y2="750.0" stroke="#bbb" stroke-width="1.5"/>
<line x1="994.7" y1="747.0" x2="994.7" y2="750.0" stroke="#bbb" stroke-width="1.5"/>
<line x1="1010.1" y1="747.0" x2="1010.1" y2="751.5" stroke="#aaa" stroke-width="2"/>
<line x1="1025.4" y1="747.0" x2="1025.4" y2="750.0" stroke="#bbb" stroke-width="1.5"/>
<line x1="1040.7" y1="747.0" x2="1040.7" y2="750.0" stroke="#bbb" stroke-width="1.5"/>
<line x1="1056.1" y1="747.0" x2="1056.1" y2="750.0" stroke="#bbb" stroke-width="1.5"/>
<line x1="1071.4" y1="747.0" x2="1071.4" y2="751.5" stroke="#aaa" stroke-width="2"/>
<line x1="1086.7" y1="747.0" x2="1086.7" y2="750.0" stroke="#bbb" stroke-width="1.5"/>
<line x1="1102.1" y1="747.0" x2="1102.1" y2="750.0" stroke="#bbb" stroke-width="1.5"/>
<line x1="1117.4" y1="747.0" x2="1117.4" y2="750.0" stroke="#bbb" stroke-width="1.5"/>
<line x1="1132.8" y1="747.0" x2="1132.8" y2="751.5" stroke="#aaa" stroke-width="2"/>
<line x1="1148.1" y1="747.0" x2="1148.1" y2="750.0" stroke="#bbb" stroke-width="1.5"/>
<line x1="1163.4" y1="747.0" x2="1163.4" y2="750.0" stroke="#bbb" stroke-width="1.5"/>
<line x1="1178.8" y1="747.0" x2="1178.8" y2="750.0" stroke="#bbb" stroke-width="1.5"/>
<line x1="1194.1" y1="747.0" x2="1194.1" y2="751.5" stroke="#aaa" stroke-width="2"/>
<line x1="1209.4" y1="747.0" x2="1209.4" y2="750.0" stroke="#bbb" stroke-width="1.5"/>
<line x1="1224.8" y1="747.0" x2="1224.8" y2="750.0" stroke="#bbb" stroke-width="1.5"/>
<line x1="1240.1" y1="747.0" x2="1240.1" y2="750.0" stroke="#bbb" stroke-width="1.5"/>
<line x1="1255.5" y1="747.0" x2="1255.5" y2="751.5" stroke="#aaa" stroke-width="2"/>
</svg>
<div class="t" style="left:640.50px;top:738.86px;font-size:11px">0</div>
<div class="t" style="left:633.50px;top:712.96px;font-size:11px;letter-spacing:0.850px">20</div>
<div class="t" style="left:633.50px;top:687.06px;font-size:11px;letter-spacing:0.850px">40</div>
<div class="t" style="left:633.50px;top:661.16px;font-size:11px;letter-spacing:0.850px">60</div>
<div class="t" style="left:633.50px;top:635.26px;font-size:11px;letter-spacing:0.850px">80</div>
<div class="t" style="left:626.60px;top:609.36px;font-size:11px;letter-spacing:0.825px">100</div>
<div class="t" style="left:626.60px;top:583.46px;font-size:11px;letter-spacing:0.825px">120</div>
<div class="t" style="left:626.60px;top:557.56px;font-size:11px;letter-spacing:0.825px">140</div>
<div class="t" style="left:626.60px;top:531.66px;font-size:11px;letter-spacing:0.825px">160</div>
<div class="t" style="left:626.60px;top:505.76px;font-size:11px;letter-spacing:0.825px">180</div>
<div class="t" style="left:626.60px;top:479.86px;font-size:11px;letter-spacing:0.825px">200</div>
<div class="t" style="left:626.60px;top:453.96px;font-size:11px;letter-spacing:0.825px">220</div>
<div class="t" style="left:626.60px;top:428.06px;font-size:11px;letter-spacing:0.825px">240</div>
<div class="t" style="left:626.60px;top:402.16px;font-size:11px;letter-spacing:0.825px">260</div>
<div class="t" style="left:626.60px;top:376.26px;font-size:11px;letter-spacing:0.825px">280</div>
<div class="t" style="left:626.60px;top:350.36px;font-size:11px;letter-spacing:0.825px">300</div>
<div class="t" style="left:626.60px;top:324.46px;font-size:11px;letter-spacing:0.825px">320</div>
<div class="t" style="left:626.60px;top:298.56px;font-size:11px;letter-spacing:0.825px">340</div>
<div class="t" style="left:626.60px;top:272.66px;font-size:11px;letter-spacing:0.825px">360</div>
<div class="t" style="left:626.60px;top:246.76px;font-size:11px;letter-spacing:0.825px">380</div>
<div class="t" style="left:626.60px;top:220.86px;font-size:11px;letter-spacing:0.825px">400</div>
<div class="t" style="left:626.60px;top:194.96px;font-size:11px;letter-spacing:0.825px">420</div>
<div class="t" style="left:647.75px;top:753.36px;font-size:11px;letter-spacing:0.770px">100.00</div>
<div class="t" style="left:696.83px;top:753.36px;font-size:11px;letter-spacing:0.770px">100.40</div>
<div class="t" style="left:758.18px;top:753.36px;font-size:11px;letter-spacing:0.770px">100.90</div>
<div class="t" style="left:807.26px;top:753.36px;font-size:11px;letter-spacing:0.770px">101.30</div>
<div class="t" style="left:868.61px;top:753.36px;font-size:11px;letter-spacing:0.770px">101.80</div>
<div class="t" style="left:929.96px;top:753.36px;font-size:11px;letter-spacing:0.770px">102.30</div>
<div class="t" style="left:991.31px;top:753.36px;font-size:11px;letter-spacing:0.770px">102.80</div>
<div class="t" style="left:1052.66px;top:753.36px;font-size:11px;letter-spacing:0.770px">103.30</div>
<div class="t" style="left:1114.01px;top:753.36px;font-size:11px;letter-spacing:0.770px">103.80</div>
<div class="t" style="left:1175.36px;top:753.36px;font-size:11px;letter-spacing:0.770px">104.30</div>
<div class="t" style="left:1236.71px;top:753.36px;font-size:11px;letter-spacing:0.770px">104.80</div>
<div class="t" style="left:877.50px;top:171.36px;font-size:11px;letter-spacing:0.755px;color:#1a10ff">Single Value Histogram</div>

<!-- bottom -->
<div class="a" style="left:0;top:800px;width:1288px;height:2px;background:#6a97d0"></div>
<div class="a" style="left:0;top:838px;width:1288px;height:1px;background:#8d8d8d"></div>
<div class="btn" style="left:1149px;top:806px;width:138px;height:28px;line-height:26px;border-radius:4px;padding-right:12px"></div>
<svg class="a" style="left:1276px;top:816px" width="9" height="6"><path d="M0.5 0.5 L4.5 4.5 L8.5 0.5" fill="none" stroke="#333" stroke-width="1"/></svg>
<div class="t" style="left:26.25px;top:7.03px;font-size:12px;letter-spacing:-0.105px;color:#8c8c8c">Monte Carlo Variables</div>
<div class="t" style="left:8.20px;top:65.36px;font-size:11px;letter-spacing:-0.267px">Variable Details</div>
<div class="t" style="left:7.00px;top:94.36px;font-size:11px;letter-spacing:-0.413px">Variable Name</div>
<div class="t" style="left:94.80px;top:94.36px;font-size:11px;letter-spacing:-0.436px">CDF Dist IWL</div>
<div class="t" style="left:360.60px;top:94.36px;font-size:11px;letter-spacing:-0.717px">File</div>
<div class="t" style="left:386.00px;top:94.36px;font-size:11px;letter-spacing:-0.779px">WBN File</div>
<div class="t" style="left:8.20px;top:133.36px;font-size:11px;letter-spacing:-0.188px">Variable Type</div>
<div class="t" style="left:20.50px;top:163.36px;font-size:11px;letter-spacing:-0.417px">Type</div>
<div class="t" style="left:81.50px;top:163.36px;font-size:11px;letter-spacing:-0.414px">Single Value</div>
<div class="t" style="left:26.10px;top:193.03px;font-size:12px;letter-spacing:-0.091px">Single Value</div>
<div class="t" style="left:39.80px;top:217.36px;font-size:11px;letter-spacing:-0.173px">Distribution</div>
<div class="t" style="left:107.30px;top:217.36px;font-size:11px;letter-spacing:-0.517px">Manual CDF</div>
<div class="t" style="left:279.90px;top:217.36px;font-size:11px;letter-spacing:0.006px">Injection</div>
<div class="t" style="left:330.40px;top:217.36px;font-size:11px;letter-spacing:-0.051px">Replace line with value (right justified)</div>
<div class="t" style="left:65.40px;top:246.36px;font-size:11px;letter-spacing:-0.120px">Prefix</div>
<div class="t" style="left:293.60px;top:246.36px;font-size:11px">Suffix</div>
<div class="t" style="left:298.60px;top:271.36px;font-size:11px;letter-spacing:-0.733px">Line</div>
<div class="t" style="left:327.10px;top:271.36px;font-size:11px;letter-spacing:-0.675px">120</div>
<div class="t" style="left:371.40px;top:271.36px;font-size:11px;letter-spacing:-0.379px">Position</div>
<div class="t" style="left:418.60px;top:271.36px;font-size:11px;letter-spacing:-1.050px">12</div>
<div class="t" style="left:486.60px;top:271.36px;font-size:11px;letter-spacing:-0.679px">Decimals</div>
<div class="t" style="left:536.60px;top:271.36px;font-size:11px">2</div>
<div class="t" style="left:33.40px;top:308.03px;font-size:12px;letter-spacing:-0.617px">Manual CDF</div>
<div class="t" style="left:36.50px;top:332.36px;font-size:11px;letter-spacing:-0.103px">Stochastic (0-100)</div>
<div class="t" style="left:136.50px;top:332.36px;font-size:11px;letter-spacing:-0.240px">Result</div>
<div class="t" style="left:126.20px;top:349.36px;font-size:11px">0</div>
<div class="t" style="left:193.60px;top:349.36px;font-size:11px;letter-spacing:0.125px">100</div>
<div class="t" style="left:120.70px;top:365.36px;font-size:11px;letter-spacing:0.200px">11</div>
<div class="t" style="left:179.70px;top:365.36px;font-size:11px;letter-spacing:-0.230px">100.28</div>
<div class="t" style="left:120.70px;top:381.36px;font-size:11px;letter-spacing:-0.650px">22</div>
<div class="t" style="left:179.70px;top:381.36px;font-size:11px;letter-spacing:-0.230px">100.56</div>
<div class="t" style="left:120.70px;top:397.36px;font-size:11px;letter-spacing:-0.650px">33</div>
<div class="t" style="left:179.70px;top:397.36px;font-size:11px;letter-spacing:-0.230px">100.83</div>
<div class="t" style="left:120.70px;top:413.36px;font-size:11px;letter-spacing:-0.650px">44</div>
<div class="t" style="left:179.70px;top:413.36px;font-size:11px;letter-spacing:-0.070px">101.11</div>
<div class="t" style="left:52.30px;top:442.36px;font-size:11px;letter-spacing:0.359px">Import Table</div>
<div class="t" style="left:189.20px;top:442.36px;font-size:11px;letter-spacing:-0.075px">Check and Chart</div>
<div class="t" style="left:8.20px;top:494.36px;font-size:11px;letter-spacing:0.017px">Test</div>
<div class="t" style="left:36.10px;top:521.86px;font-size:11px;letter-spacing:0.032px">Test on File</div>
<div class="t" style="left:123.50px;top:524.36px;font-size:11px;letter-spacing:-0.405px">Random Value</div>
<div class="t" style="left:200.30px;top:524.36px;font-size:11px;letter-spacing:0.500px">0.57</div>
<div class="t" style="left:297.00px;top:524.36px;font-size:11px;letter-spacing:-0.206px">Transformed Value</div>
<div class="t" style="left:409.50px;top:524.36px;font-size:11px;letter-spacing:-0.030px">101.42</div>
<div class="t" style="left:512.50px;top:521.86px;font-size:11px;letter-spacing:0.310px">Update</div>
<div class="t" style="left:40.90px;top:550.36px;font-size:11px;letter-spacing:-0.310px">102.00</div>
<div class="t" style="left:91.80px;top:550.36px;font-size:11px;letter-spacing:-0.130px">400.00</div>
<div class="t" style="left:40.90px;top:563.36px;font-size:11px;letter-spacing:-0.310px">102.50</div>
<div class="t" style="left:91.80px;top:563.36px;font-size:11px;letter-spacing:-0.130px">500.00</div>
<div class="t" style="left:40.90px;top:576.36px;font-size:11px;letter-spacing:-0.310px">103.00</div>
<div class="t" style="left:91.80px;top:576.36px;font-size:11px;letter-spacing:-0.130px">600.00</div>
<div class="t" style="left:40.90px;top:589.36px;font-size:11px;letter-spacing:-0.310px">103.50</div>
<div class="t" style="left:91.80px;top:589.36px;font-size:11px;letter-spacing:-0.130px">700.00</div>
<div class="t" style="left:40.90px;top:602.36px;font-size:11px;letter-spacing:-0.310px">104.00</div>
<div class="t" style="left:91.80px;top:602.36px;font-size:11px;letter-spacing:-0.130px">800.00</div>
<div class="t" style="left:40.90px;top:615.36px;font-size:11px;letter-spacing:-0.310px">104.50</div>
<div class="t" style="left:91.80px;top:615.36px;font-size:11px;letter-spacing:-0.130px">900.00</div>
<div class="t" style="left:40.90px;top:628.36px;font-size:11px;letter-spacing:-0.310px">105.00</div>
<div class="t" style="left:89.60px;top:628.36px;font-size:11px;letter-spacing:-0.242px">1000.00</div>
<div class="t" style="left:40.90px;top:641.36px;font-size:11px;letter-spacing:-0.310px">105.50</div>
<div class="t" style="left:89.60px;top:641.36px;font-size:11px;letter-spacing:-0.108px">1100.00</div>
<div class="t" style="left:40.90px;top:654.36px;font-size:11px;letter-spacing:0.590px;font-weight:bold">101.42</div>
<div class="t" style="left:45.70px;top:667.36px;font-size:11px;letter-spacing:-0.100px">0.00</div>
<div class="t" style="left:46.80px;top:680.36px;font-size:11px;letter-spacing:-0.467px">1.00</div>
<div class="t" style="left:22.60px;top:693.20px;font-size:11.5px;letter-spacing:1.625px">#####</div>
<div class="t" style="left:61.70px;top:693.36px;font-size:11px;letter-spacing:-0.662px">END_BASIN_DETAILS</div>
<div class="t" style="left:22.60px;top:706.20px;font-size:11.5px;letter-spacing:1.625px">#####</div>
<div class="t" style="left:61.70px;top:706.36px;font-size:11px;letter-spacing:-0.762px">END_OUTLET_STRUCTURE#1</div>
<div class="t" style="left:22.60px;top:719.20px;font-size:11.5px;letter-spacing:1.625px">#####</div>
<div class="t" style="left:61.70px;top:719.36px;font-size:11px;letter-spacing:-0.944px">END_OUTLET_STRUCTURES_BLOCK</div>
<div class="t" style="left:235.50px;top:719.20px;font-size:11.5px;letter-spacing:1.650px">###</div>
<div class="t" style="left:260.50px;top:719.36px;font-size:11px">|</div>
<div class="t" style="left:264.50px;top:719.20px;font-size:11.5px;letter-spacing:1.565px">###########</div>
<div class="t" style="left:352.80px;top:719.36px;font-size:11px">|</div>
<div class="t" style="left:356.80px;top:719.20px;font-size:11.5px;letter-spacing:1.565px">###########</div>
<div class="t" style="left:445.10px;top:719.36px;font-size:11px">|</div>
<div class="t" style="left:449.10px;top:719.20px;font-size:11.5px;letter-spacing:1.565px">###########</div>
<div class="t" style="left:537.40px;top:719.36px;font-size:11px">|</div>
<div class="t" style="left:22.60px;top:758.20px;font-size:11.5px;letter-spacing:1.625px">#####</div>
<div class="t" style="left:61.70px;top:758.36px;font-size:11px;letter-spacing:-0.756px">START_STORM_BLOCK</div>
<div class="t" style="left:174.30px;top:758.20px;font-size:11.5px;letter-spacing:1.571px">#############</div>
<div class="t" style="left:277.50px;top:758.36px;font-size:11px">|</div>
<div class="t" style="left:281.50px;top:758.20px;font-size:11.5px;letter-spacing:1.565px">###########</div>
<div class="t" style="left:369.80px;top:758.36px;font-size:11px">|</div>
<div class="t" style="left:373.80px;top:758.20px;font-size:11.5px;letter-spacing:1.565px">###########</div>
<div class="t" style="left:462.10px;top:758.36px;font-size:11px">|</div>
<div class="t" style="left:466.10px;top:758.20px;font-size:11.5px;letter-spacing:1.565px">###########</div>
<div class="t" style="left:554.40px;top:758.36px;font-size:11px">|</div>
<div class="t" style="left:601.10px;top:65.36px;font-size:11px;letter-spacing:-0.229px">Charting</div>
<div class="t" style="left:603.50px;top:87.03px;font-size:12px;letter-spacing:0.015px">Single Value Parameter Distribution</div>
<div class="t" style="left:623.40px;top:112.36px;font-size:11px;letter-spacing:0.090px">Visualise Distribution</div>
<div class="t" style="left:780.55px;top:111.36px;font-size:11px;letter-spacing:-0.033px">with</div>
<div class="t" style="left:809.60px;top:111.36px;font-size:11px;letter-spacing:-0.225px">10000</div>
<div class="t" style="left:871.00px;top:111.36px;font-size:11px;letter-spacing:-0.338px">random samples</div>
<div class="t" style="left:957.80px;top:111.36px;font-size:11px;letter-spacing:-0.950px">50</div>
<div class="t" style="left:995.40px;top:111.36px;font-size:11px;letter-spacing:-0.200px">bars</div>
<div class="t" style="left:1177.00px;top:813.36px;font-size:11px;letter-spacing:0.087px">Save Variable</div>
<div class="a" style="left:20px;top:767px;width:553px;height:17px;background:#f0f0f0"></div><div class="a" style="left:38px;top:774px;width:392px;height:2px;background:#777"></div>
</body></html>
